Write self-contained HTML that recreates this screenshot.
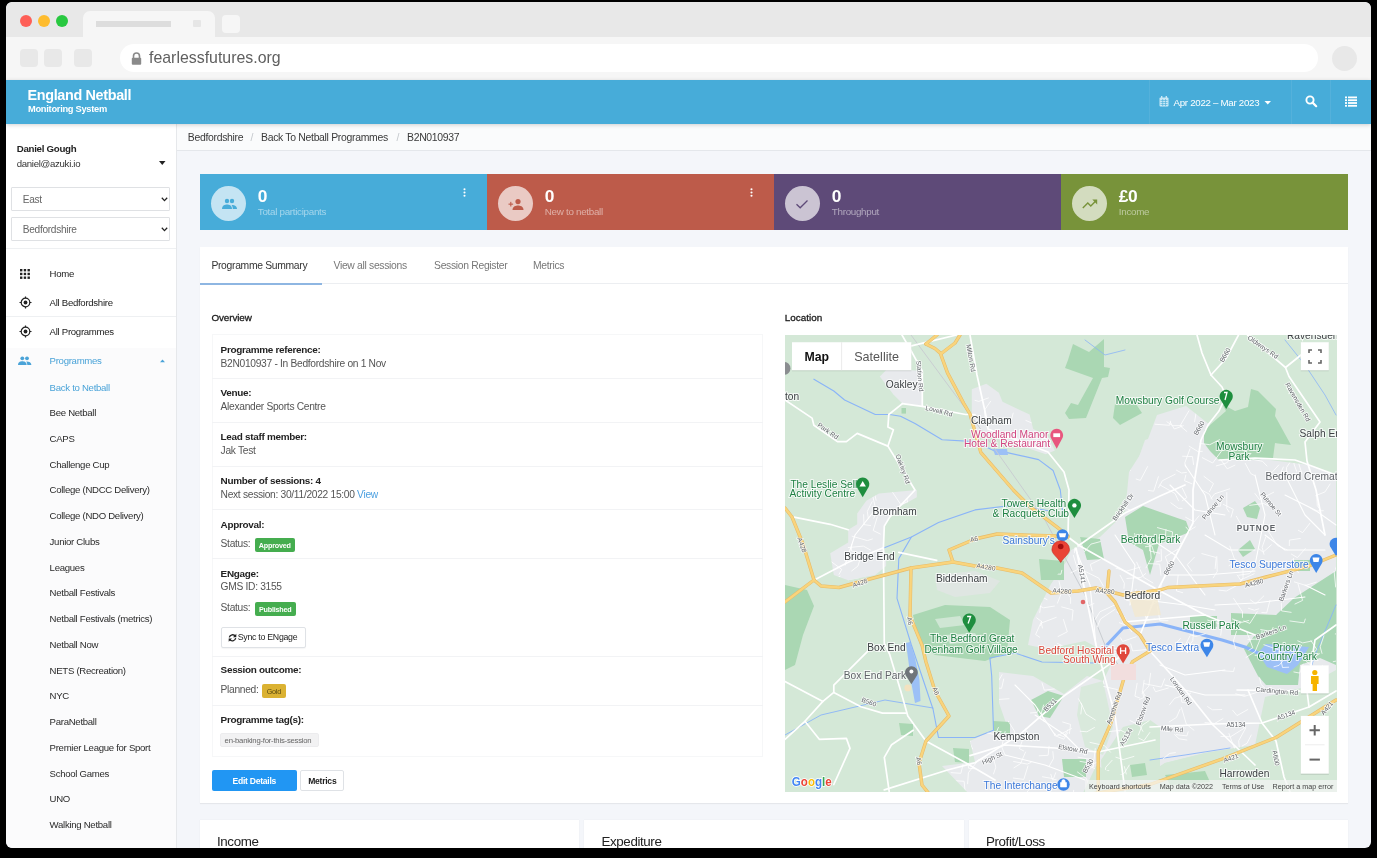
<!DOCTYPE html>
<html><head><meta charset="utf-8"><title>England Netball</title>
<style>
html,body{margin:0;padding:0;}
body{width:1377px;height:858px;background:#000;position:relative;overflow:hidden;font-family:"Liberation Sans",sans-serif;}
.t{position:absolute;line-height:1;white-space:nowrap;}
.b{position:absolute;box-sizing:border-box;}
#win{position:absolute;left:6px;top:2px;width:1365px;height:846px;border-radius:6px;overflow:hidden;background:#f4f6fa;}
</style></head><body>

<div id="win"></div><div id="clip" style="position:absolute;left:0;top:0;width:1377px;height:858px;will-change:transform;clip-path:inset(2px 6px 10px 6px round 6px 6px 7px 7px);">
<div class="b" style="left:6px;top:2px;width:1365px;height:35px;background:#e8e8e8;border-radius:6px 6px 0 0;"></div>
<div class="b" style="left:6px;top:37px;width:1365px;height:43px;background:#f6f6f6;"></div>
<div class="b" style="left:19.8px;top:14.8px;width:12.400000000000002px;height:12.399999999999999px;background:#fe5f57;border-radius:50%;"></div>
<div class="b" style="left:37.8px;top:14.8px;width:12.400000000000006px;height:12.399999999999999px;background:#febc2e;border-radius:50%;"></div>
<div class="b" style="left:55.8px;top:14.8px;width:12.400000000000006px;height:12.399999999999999px;background:#28c840;border-radius:50%;"></div>
<div class="b" style="left:83px;top:11px;width:132px;height:26px;background:#f6f6f6;border-radius:7px 7px 0 0;"></div>
<div class="b" style="left:96px;top:21px;width:75px;height:6px;background:#dddddd;"></div>
<div class="b" style="left:193px;top:20px;width:8px;height:7px;background:#e6e6e6;border-radius:1px;"></div>
<div class="b" style="left:222px;top:15px;width:18px;height:18px;background:#f6f6f6;border-radius:4px;"></div>
<div class="b" style="left:20px;top:49px;width:18px;height:18px;background:#e8e8e8;border-radius:4px;"></div>
<div class="b" style="left:44px;top:49px;width:18px;height:18px;background:#e8e8e8;border-radius:4px;"></div>
<div class="b" style="left:74px;top:49px;width:18px;height:18px;background:#e8e8e8;border-radius:4px;"></div>
<div class="b" style="left:120px;top:44px;width:1198px;height:28px;background:#ffffff;border-radius:14px;"></div>
<svg class="b" style="left:131px;top:52px;" width="11" height="13" viewBox="0 0 11 13"><path d="M2.5 6 V4 A3 3 0 0 1 8.5 4 V6" fill="none" stroke="#8a8a8a" stroke-width="1.6"/><rect x="0.8" y="5.8" width="9.4" height="7" rx="1" fill="#8a8a8a"/></svg>
<div class="t" style="left:149.00px;top:49.98px;font-size:15.9px;font-weight:400;color:#606060;">fearlessfutures.org</div>
<div class="b" style="left:1332px;top:46px;width:25px;height:25px;background:#e8e8e8;border-radius:50%;"></div>
<div class="b" style="left:6px;top:80px;width:1365px;height:44px;background:#47acd9;box-shadow:0 1px 4px rgba(0,0,0,0.18);z-index:2;"></div>
<div class="t" style="left:27.60px;top:88.16px;font-size:14.4px;font-weight:700;color:#ffffff;z-index:3;letter-spacing:-0.35px;">England Netball</div>
<div class="t" style="left:28.00px;top:105.30px;font-size:9.3px;font-weight:700;color:#ffffff;letter-spacing:-0.03em;z-index:3;">Monitoring System</div>
<div class="b" style="left:1149px;top:80px;width:1px;height:44px;background:rgba(255,255,255,0.07);z-index:3;"></div>
<div class="b" style="left:1290.5px;top:80px;width:1.0px;height:44px;background:rgba(255,255,255,0.07);z-index:3;"></div>
<div class="b" style="left:1330px;top:80px;width:1px;height:44px;background:rgba(255,255,255,0.07);z-index:3;"></div>
<svg class="b" style="left:1159px;top:96px;z-index:3;" width="10" height="11" viewBox="0 0 10 11"><rect x="0.5" y="1.5" width="9" height="9" rx="1" fill="#c9e8f6"/><rect x="2" y="0" width="1.4" height="2.5" fill="#c9e8f6"/><rect x="6.6" y="0" width="1.4" height="2.5" fill="#c9e8f6"/><g fill="#47acd9"><rect x="1.5" y="4" width="7" height="0.6"/><rect x="1.5" y="6" width="7" height="0.6"/><rect x="1.5" y="8" width="7" height="0.6"/><rect x="3.5" y="3" width="0.6" height="7"/><rect x="6" y="3" width="0.6" height="7"/></g></svg>
<div class="t" style="left:1173.50px;top:97.74px;font-size:9.72px;font-weight:400;color:#ffffff;letter-spacing:-0.03em;z-index:3;">Apr 2022 &#8211; Mar 2023</div>
<svg class="b" style="left:1264px;top:100px;z-index:3;" width="8" height="5" viewBox="0 0 8 5"><path d="M0.5 1 L7 1 L3.75 4.5 Z" fill="#ffffff"/></svg>
<svg class="b" style="left:1305px;top:95px;z-index:3;" width="13" height="13" viewBox="0 0 13 13"><circle cx="5" cy="5" r="3.6" fill="none" stroke="#ffffff" stroke-width="1.9"/><path d="M7.6 7.6 L11.2 11.2" stroke="#ffffff" stroke-width="2.2" stroke-linecap="round"/></svg>
<svg class="b" style="left:1345px;top:96px;z-index:3;" width="12" height="11" viewBox="0 0 12 11"><g fill="#ffffff"><rect x="0" y="0.5" width="2" height="1.8"/><rect x="3" y="0.5" width="9" height="1.8"/><rect x="0" y="3.3" width="2" height="1.8"/><rect x="3" y="3.3" width="9" height="1.8"/><rect x="0" y="6.1" width="2" height="1.8"/><rect x="3" y="6.1" width="9" height="1.8"/><rect x="0" y="8.9" width="2" height="1.8"/><rect x="3" y="8.9" width="9" height="1.8"/></g></svg>
<div class="b" style="left:6px;top:124px;width:171px;height:724px;background:#ffffff;border-right:1px solid #e6e8eb;"></div>
<div class="b" style="left:6px;top:347.5px;width:170px;height:500.5px;background:#fbfbfc;"></div>
<div class="t" style="left:16.70px;top:144.34px;font-size:9.72px;font-weight:700;color:#222222;letter-spacing:-0.03em;">Daniel Gough</div>
<div class="t" style="left:16.70px;top:158.53px;font-size:9.61px;font-weight:400;color:#333333;letter-spacing:-0.03em;">daniel@azuki.io</div>
<svg class="b" style="left:158.5px;top:160.5px;" width="7" height="4.5" viewBox="0 0 7 4.5"><path d="M0 0 L6.5 0 L3.25 4 Z" fill="#222"/></svg>
<div class="b" style="left:11px;top:187px;width:159px;height:24px;background:#fff;border:1px solid #dfe1e4;border-radius:1px;"></div>
<div class="b" style="left:11px;top:217px;width:159px;height:24px;background:#fff;border:1px solid #dfe1e4;border-radius:1px;"></div>
<div class="t" style="left:22.80px;top:194.98px;font-size:10.14px;font-weight:400;color:#666666;letter-spacing:-0.03em;">East</div>
<div class="t" style="left:22.80px;top:224.98px;font-size:10.14px;font-weight:400;color:#666666;letter-spacing:-0.03em;">Bedfordshire</div>
<svg class="b" style="left:160.5px;top:196.5px;" width="7" height="5" viewBox="0 0 7 5"><path d="M0.8 0.8 L3.5 3.6 L6.2 0.8" fill="none" stroke="#222" stroke-width="1.3"/></svg>
<svg class="b" style="left:160.5px;top:226.5px;" width="7" height="5" viewBox="0 0 7 5"><path d="M0.8 0.8 L3.5 3.6 L6.2 0.8" fill="none" stroke="#222" stroke-width="1.3"/></svg>
<div class="b" style="left:6px;top:247.5px;width:170px;height:1.0px;background:#eef0f2;"></div>
<div class="b" style="left:6px;top:316px;width:170px;height:1px;background:#eef0f2;"></div>
<svg class="b" style="left:20px;top:269px;" width="10" height="10" viewBox="0 0 10 10"><rect x="0.00" y="0.00" width="2.4" height="2.4" fill="#222"/><rect x="3.75" y="0.00" width="2.4" height="2.4" fill="#222"/><rect x="7.50" y="0.00" width="2.4" height="2.4" fill="#222"/><rect x="0.00" y="3.75" width="2.4" height="2.4" fill="#222"/><rect x="3.75" y="3.75" width="2.4" height="2.4" fill="#222"/><rect x="7.50" y="3.75" width="2.4" height="2.4" fill="#222"/><rect x="0.00" y="7.50" width="2.4" height="2.4" fill="#222"/><rect x="3.75" y="7.50" width="2.4" height="2.4" fill="#222"/><rect x="7.50" y="7.50" width="2.4" height="2.4" fill="#222"/></svg>
<svg class="b" style="left:18.5px;top:295.8px;" width="13" height="13" viewBox="0 0 13 13"><circle cx="6.5" cy="6.5" r="4.3" fill="none" stroke="#222" stroke-width="1.2"/><circle cx="6.5" cy="6.5" r="1.9" fill="#222"/><path d="M6.5 0.5 V2.2 M6.5 10.8 V12.5 M0.5 6.5 H2.2 M10.8 6.5 H12.5" stroke="#222" stroke-width="1.2"/></svg>
<svg class="b" style="left:18.5px;top:325px;" width="13" height="13" viewBox="0 0 13 13"><circle cx="6.5" cy="6.5" r="4.3" fill="none" stroke="#222" stroke-width="1.2"/><circle cx="6.5" cy="6.5" r="1.9" fill="#222"/><path d="M6.5 0.5 V2.2 M6.5 10.8 V12.5 M0.5 6.5 H2.2 M10.8 6.5 H12.5" stroke="#222" stroke-width="1.2"/></svg>
<svg class="b" style="left:18.3px;top:355.8px;" width="14" height="10" viewBox="0 0 14 10"><g fill="#4aa3d8"><circle cx="4.3" cy="2.3" r="1.9"/><circle cx="9" cy="2.3" r="1.9"/><path d="M0 9 C0 5.8 2.5 5.2 4.3 5.2 C6.1 5.2 8.6 5.8 8.6 9 Z"/><path d="M9.3 9 C9.3 7.4 8.9 6.3 8.2 5.4 C11 5.3 13.4 6.2 13.4 9 Z"/></g></svg>
<div class="t" style="left:49.60px;top:269.03px;font-size:9.61px;font-weight:400;color:#222222;letter-spacing:-0.03em;">Home</div>
<div class="t" style="left:49.60px;top:298.43px;font-size:9.61px;font-weight:400;color:#222222;letter-spacing:-0.03em;">All Bedfordshire</div>
<div class="t" style="left:49.60px;top:327.03px;font-size:9.61px;font-weight:400;color:#222222;letter-spacing:-0.03em;">All Programmes</div>
<div class="t" style="left:49.60px;top:356.03px;font-size:9.61px;font-weight:400;color:#4aa3d8;letter-spacing:-0.03em;">Programmes</div>
<svg class="b" style="left:159.5px;top:359px;" width="6" height="4" viewBox="0 0 6 4"><path d="M0 3.2 L5 3.2 L2.5 0.4 Z" fill="#4aa3d8"/></svg>
<div class="t" style="left:49.60px;top:382.53px;font-size:9.61px;font-weight:400;color:#4aa3d8;letter-spacing:-0.03em;">Back to Netball</div>
<div class="t" style="left:49.60px;top:408.27px;font-size:9.61px;font-weight:400;color:#2a2a2a;letter-spacing:-0.03em;">Bee Netball</div>
<div class="t" style="left:49.60px;top:434.01px;font-size:9.61px;font-weight:400;color:#2a2a2a;letter-spacing:-0.03em;">CAPS</div>
<div class="t" style="left:49.60px;top:459.75px;font-size:9.61px;font-weight:400;color:#2a2a2a;letter-spacing:-0.03em;">Challenge Cup</div>
<div class="t" style="left:49.60px;top:485.49px;font-size:9.61px;font-weight:400;color:#2a2a2a;letter-spacing:-0.03em;">College (NDCC Delivery)</div>
<div class="t" style="left:49.60px;top:511.23px;font-size:9.61px;font-weight:400;color:#2a2a2a;letter-spacing:-0.03em;">College (NDO Delivery)</div>
<div class="t" style="left:49.60px;top:536.97px;font-size:9.61px;font-weight:400;color:#2a2a2a;letter-spacing:-0.03em;">Junior Clubs</div>
<div class="t" style="left:49.60px;top:562.71px;font-size:9.61px;font-weight:400;color:#2a2a2a;letter-spacing:-0.03em;">Leagues</div>
<div class="t" style="left:49.60px;top:588.45px;font-size:9.61px;font-weight:400;color:#2a2a2a;letter-spacing:-0.03em;">Netball Festivals</div>
<div class="t" style="left:49.60px;top:614.19px;font-size:9.61px;font-weight:400;color:#2a2a2a;letter-spacing:-0.03em;">Netball Festivals (metrics)</div>
<div class="t" style="left:49.60px;top:639.93px;font-size:9.61px;font-weight:400;color:#2a2a2a;letter-spacing:-0.03em;">Netball Now</div>
<div class="t" style="left:49.60px;top:665.67px;font-size:9.61px;font-weight:400;color:#2a2a2a;letter-spacing:-0.03em;">NETS (Recreation)</div>
<div class="t" style="left:49.60px;top:691.41px;font-size:9.61px;font-weight:400;color:#2a2a2a;letter-spacing:-0.03em;">NYC</div>
<div class="t" style="left:49.60px;top:717.15px;font-size:9.61px;font-weight:400;color:#2a2a2a;letter-spacing:-0.03em;">ParaNetball</div>
<div class="t" style="left:49.60px;top:742.89px;font-size:9.61px;font-weight:400;color:#2a2a2a;letter-spacing:-0.03em;">Premier League for Sport</div>
<div class="t" style="left:49.60px;top:768.63px;font-size:9.61px;font-weight:400;color:#2a2a2a;letter-spacing:-0.03em;">School Games</div>
<div class="t" style="left:49.60px;top:794.37px;font-size:9.61px;font-weight:400;color:#2a2a2a;letter-spacing:-0.03em;">UNO</div>
<div class="t" style="left:49.60px;top:820.11px;font-size:9.61px;font-weight:400;color:#2a2a2a;letter-spacing:-0.03em;">Walking Netball</div>
<div class="b" style="left:177px;top:124px;width:1194px;height:27px;background:#fafbfc;border-bottom:1px solid #e4e7eb;"></div>
<div class="t" style="left:187.80px;top:132.72px;font-size:10.45px;font-weight:400;color:#3a3a3a;letter-spacing:-0.03em;">Bedfordshire</div>
<div class="t" style="left:250.50px;top:132.72px;font-size:10.45px;font-weight:400;color:#c4c8cc;letter-spacing:-0.03em;">/</div>
<div class="t" style="left:261.00px;top:132.72px;font-size:10.45px;font-weight:400;color:#3a3a3a;letter-spacing:-0.03em;">Back To Netball Programmes</div>
<div class="t" style="left:396.50px;top:132.72px;font-size:10.45px;font-weight:400;color:#c4c8cc;letter-spacing:-0.03em;">/</div>
<div class="t" style="left:407.00px;top:132.72px;font-size:10.45px;font-weight:400;color:#3a3a3a;letter-spacing:-0.03em;">B2N010937</div>
<div class="b" style="left:200px;top:174px;width:287px;height:56px;background:#47acd9;"></div>
<div class="b" style="left:211px;top:186px;width:35px;height:35px;background:rgba(255,255,255,0.68);border-radius:50%;"></div>
<svg class="b" style="left:220.5px;top:197.5px;" width="17" height="13" viewBox="0 0 17 13"><g fill="#47acd9"><circle cx="6" cy="3" r="2.2"/><circle cx="11" cy="3" r="2.2"/><path d="M1 11 C1 7.3 4 6.6 6 6.6 C8 6.6 11 7.3 11 11 Z"/><path d="M11.8 11 C11.8 9 11.3 7.8 10.5 6.9 C13.5 6.8 16 7.8 16 11 Z"/></g></svg>
<div class="t" style="left:257.80px;top:187.55px;font-size:17.35px;font-weight:700;color:#ffffff;letter-spacing:-0.03em;">0</div>
<div class="t" style="left:257.80px;top:206.95px;font-size:9.82px;font-weight:400;color:rgba(255,255,255,0.5);letter-spacing:-0.03em;">Total participants</div>
<svg class="b" style="left:463px;top:188px;" width="3" height="9" viewBox="0 0 3 9"><g fill="#fff"><circle cx="1.5" cy="1.2" r="1.05"/><circle cx="1.5" cy="4.5" r="1.05"/><circle cx="1.5" cy="7.8" r="1.05"/></g></svg>
<div class="b" style="left:487px;top:174px;width:287px;height:56px;background:#bd5b4a;"></div>
<div class="b" style="left:498px;top:186px;width:35px;height:35px;background:rgba(255,255,255,0.68);border-radius:50%;"></div>
<svg class="b" style="left:507.5px;top:197.5px;" width="17" height="13" viewBox="0 0 17 13"><g fill="#bd5b4a"><circle cx="10" cy="3.6" r="2.6"/><path d="M4.5 12 C4.5 8.4 8 7.6 10 7.6 C12 7.6 15.5 8.4 15.5 12 Z"/><rect x="0.5" y="5.6" width="4.6" height="1.1"/><rect x="2.25" y="3.85" width="1.1" height="4.6"/></g></svg>
<div class="t" style="left:544.80px;top:187.55px;font-size:17.35px;font-weight:700;color:#ffffff;letter-spacing:-0.03em;">0</div>
<div class="t" style="left:544.80px;top:206.95px;font-size:9.82px;font-weight:400;color:rgba(255,255,255,0.5);letter-spacing:-0.03em;">New to netball</div>
<svg class="b" style="left:750px;top:188px;" width="3" height="9" viewBox="0 0 3 9"><g fill="#fff"><circle cx="1.5" cy="1.2" r="1.05"/><circle cx="1.5" cy="4.5" r="1.05"/><circle cx="1.5" cy="7.8" r="1.05"/></g></svg>
<div class="b" style="left:774px;top:174px;width:287px;height:56px;background:#5e4a78;"></div>
<div class="b" style="left:785px;top:186px;width:35px;height:35px;background:rgba(255,255,255,0.68);border-radius:50%;"></div>
<svg class="b" style="left:794.5px;top:197.5px;" width="17" height="13" viewBox="0 0 17 13"><path d="M1.5 6.2 L5.2 9.8 L12.5 2.5" fill="none" stroke="#5e4a78" stroke-width="1.3"/></svg>
<div class="t" style="left:831.80px;top:187.55px;font-size:17.35px;font-weight:700;color:#ffffff;letter-spacing:-0.03em;">0</div>
<div class="t" style="left:831.80px;top:206.95px;font-size:9.82px;font-weight:400;color:rgba(255,255,255,0.5);letter-spacing:-0.03em;">Throughput</div>
<div class="b" style="left:1061px;top:174px;width:287px;height:56px;background:#78933a;"></div>
<div class="b" style="left:1072px;top:186px;width:35px;height:35px;background:rgba(255,255,255,0.68);border-radius:50%;"></div>
<svg class="b" style="left:1081.5px;top:197.5px;" width="17" height="13" viewBox="0 0 17 13"><path d="M0.8 10 L5.8 5 L8.8 8 L14 2.8" fill="none" stroke="#78933a" stroke-width="1.4"/><path d="M10.3 1.6 L15.2 1.6 L15.2 6.5 Z" fill="#78933a"/></svg>
<div class="t" style="left:1118.80px;top:187.55px;font-size:17.35px;font-weight:700;color:#ffffff;letter-spacing:-0.03em;">&#163;0</div>
<div class="t" style="left:1118.80px;top:206.95px;font-size:9.82px;font-weight:400;color:rgba(255,255,255,0.5);letter-spacing:-0.03em;">Income</div>
<div class="b" style="left:200px;top:247px;width:1148px;height:556px;background:#ffffff;box-shadow:0 1px 1px rgba(0,0,0,0.06);"></div>
<div class="b" style="left:200px;top:283px;width:1148px;height:1px;background:#eceef1;"></div>
<div class="b" style="left:200px;top:282.5px;width:122px;height:2.0px;background:#8eb6e2;"></div>
<div class="t" style="left:211.40px;top:261.20px;font-size:10.35px;font-weight:400;color:#333333;letter-spacing:-0.03em;">Programme Summary</div>
<div class="t" style="left:333.50px;top:261.20px;font-size:10.35px;font-weight:400;color:#777777;letter-spacing:-0.03em;">View all sessions</div>
<div class="t" style="left:434.10px;top:261.20px;font-size:10.35px;font-weight:400;color:#777777;letter-spacing:-0.03em;">Session Register</div>
<div class="t" style="left:533.00px;top:261.20px;font-size:10.35px;font-weight:400;color:#777777;letter-spacing:-0.03em;">Metrics</div>
<div class="t" style="left:211.40px;top:312.99px;font-size:9.9px;font-weight:400;color:#1a1a1a;letter-spacing:-0.1px;-webkit-text-stroke:0.3px #1a1a1a;">Overview</div>
<div class="t" style="left:784.80px;top:312.99px;font-size:9.9px;font-weight:400;color:#1a1a1a;letter-spacing:0px;-webkit-text-stroke:0.3px #1a1a1a;">Location</div>
<div class="b" style="left:212px;top:334px;width:551px;height:423px;border:1px solid #f6f7f8;"></div>
<div class="b" style="left:212px;top:378px;width:551px;height:1px;background:#f2f3f5;"></div>
<div class="b" style="left:212px;top:421.9px;width:551px;height:1.0px;background:#f2f3f5;"></div>
<div class="b" style="left:212px;top:465.5px;width:551px;height:1.0px;background:#f2f3f5;"></div>
<div class="b" style="left:212px;top:509.3px;width:551px;height:1.0px;background:#f2f3f5;"></div>
<div class="b" style="left:212px;top:558.4px;width:551px;height:1.0px;background:#f2f3f5;"></div>
<div class="b" style="left:212px;top:655.6px;width:551px;height:1.0px;background:#f2f3f5;"></div>
<div class="b" style="left:212px;top:705.1px;width:551px;height:1.0px;background:#f2f3f5;"></div>
<div class="t" style="left:220.60px;top:344.56px;font-size:9.93px;font-weight:700;color:#222222;letter-spacing:-0.03em;">Programme reference:</div>
<div class="t" style="left:220.60px;top:358.70px;font-size:10.24px;font-weight:400;color:#555555;letter-spacing:-0.03em;">B2N010937 - In Bedfordshire on 1 Nov</div>
<div class="t" style="left:220.60px;top:388.16px;font-size:9.93px;font-weight:700;color:#222222;letter-spacing:-0.03em;">Venue:</div>
<div class="t" style="left:220.60px;top:402.30px;font-size:10.24px;font-weight:400;color:#555555;letter-spacing:-0.03em;">Alexander Sports Centre</div>
<div class="t" style="left:220.60px;top:431.96px;font-size:9.93px;font-weight:700;color:#222222;letter-spacing:-0.03em;">Lead staff member:</div>
<div class="t" style="left:220.60px;top:446.10px;font-size:10.24px;font-weight:400;color:#555555;letter-spacing:-0.03em;">Jak Test</div>
<div class="t" style="left:220.60px;top:475.76px;font-size:9.93px;font-weight:700;color:#222222;letter-spacing:-0.03em;">Number of sessions: 4</div>
<div class="t" style="left:220.60px;top:489.90px;font-size:10.24px;font-weight:400;color:#555555;letter-spacing:-0.03em;">Next session: 30/11/2022 15:00 <span style="color:#4a9fe0">View</span></div>
<div class="t" style="left:220.60px;top:519.66px;font-size:9.93px;font-weight:700;color:#222222;letter-spacing:-0.03em;">Approval:</div>
<div class="t" style="left:220.60px;top:539.00px;font-size:10.24px;font-weight:400;color:#555555;letter-spacing:-0.03em;">Status:</div>
<div class="b" style="left:254.5px;top:538px;width:40.5px;height:13.5px;background:#45ad4f;border-radius:2px;"></div>
<div class="t" style="left:74.75px;width:400px;text-align:center;top:541.67px;font-size:7.21px;font-weight:700;color:#ffffff;letter-spacing:-0.03em;">Approved</div>
<div class="t" style="left:220.60px;top:568.66px;font-size:9.93px;font-weight:700;color:#222222;letter-spacing:-0.03em;">ENgage:</div>
<div class="t" style="left:220.60px;top:582.10px;font-size:10.24px;font-weight:400;color:#555555;letter-spacing:-0.03em;">GMS ID: 3155</div>
<div class="t" style="left:220.60px;top:602.80px;font-size:10.24px;font-weight:400;color:#555555;letter-spacing:-0.03em;">Status:</div>
<div class="b" style="left:254.5px;top:602px;width:41.5px;height:13.5px;background:#45ad4f;border-radius:2px;"></div>
<div class="t" style="left:75.25px;width:400px;text-align:center;top:605.67px;font-size:7.21px;font-weight:700;color:#ffffff;letter-spacing:-0.03em;">Published</div>
<div class="b" style="left:220.7px;top:627.4px;width:85.40000000000003px;height:20.700000000000045px;background:#fff;border:1px solid #dfe2e6;border-radius:2px;box-shadow:0 1px 1px rgba(0,0,0,0.04);"></div>
<svg class="b" style="left:227.5px;top:632.5px;" width="9" height="10" viewBox="0 0 9 10"><path d="M7.4 3.2 A3.4 3.4 0 0 0 1.3 4.4" fill="none" stroke="#222" stroke-width="1.3"/><path d="M1.6 6.4 A3.4 3.4 0 0 0 7.7 5.2" fill="none" stroke="#222" stroke-width="1.3"/><path d="M8.3 0.8 L8.3 4.2 L5 4.2 Z" fill="#222"/><path d="M0.7 8.8 L0.7 5.4 L4 5.4 Z" fill="#222"/></svg>
<div class="t" style="left:237.70px;top:633.34px;font-size:8.78px;font-weight:400;color:#222222;letter-spacing:-0.03em;">Sync to ENgage</div>
<div class="t" style="left:220.60px;top:665.26px;font-size:9.93px;font-weight:700;color:#222222;letter-spacing:-0.03em;">Session outcome:</div>
<div class="t" style="left:220.60px;top:685.10px;font-size:10.24px;font-weight:400;color:#555555;letter-spacing:-0.03em;">Planned:</div>
<div class="b" style="left:261.7px;top:684.4px;width:24.30000000000001px;height:13.600000000000023px;background:#dbb232;border-radius:2px;"></div>
<div class="t" style="left:73.85px;width:400px;text-align:center;top:688.27px;font-size:7.21px;font-weight:400;color:#5a4a10;letter-spacing:-0.03em;">Gold</div>
<div class="t" style="left:220.60px;top:714.76px;font-size:9.93px;font-weight:700;color:#222222;letter-spacing:-0.03em;">Programme tag(s):</div>
<div class="b" style="left:220.3px;top:732.8px;width:98.89999999999998px;height:14.600000000000023px;background:#f2f2f3;border-radius:2px;border:1px solid #ececee;"></div>
<div class="t" style="left:224.60px;top:736.63px;font-size:7.73px;font-weight:400;color:#666666;letter-spacing:-0.03em;">en-banking-for-this-session</div>
<div class="b" style="left:211.5px;top:769.8px;width:85.5px;height:21.200000000000045px;background:#2196f3;border-radius:2px;"></div>
<div class="t" style="left:54.25px;width:400px;text-align:center;top:776.72px;font-size:8.57px;font-weight:700;color:#ffffff;letter-spacing:-0.03em;">Edit Details</div>
<div class="b" style="left:300.2px;top:769.8px;width:44.19999999999999px;height:21.200000000000045px;background:#fff;border:1px solid #dfe2e6;border-radius:2px;"></div>
<div class="t" style="left:122.30px;width:400px;text-align:center;top:776.72px;font-size:8.57px;font-weight:700;color:#222222;letter-spacing:-0.03em;">Metrics</div>
<svg class="b" style="left:785px;top:335px;" width="552" height="457" viewBox="0 0 552 457" font-family="Liberation Sans, sans-serif"><rect width="552" height="457" fill="#d4e8d7"/><polygon points="344,137 360,112 372,80 401,71 425,90 470,123 524,130 551,140 551,335 520,352 480,362 470,410 420,418 380,428 365,438 330,440 315,432 311,431 297,460 185,460 157,431 190,427 185,406 208,395 221,388 214,368 214,337 248,341 279,359 302,341 318,346 330,322 300,306 262,314 243,310 248,285 266,249 281,227 286,215 315,202 340,178" fill="#e8eaed" /><polygon points="94.8,41.5 101,35.2 126.4,35.2 137.3,36.1 137.3,70.4 117.4,68.6 108.4,59.6" fill="#e8eaed" /><polygon points="186.8,54.2 201.3,48.8 213.9,57.8 217.5,66.8 244.6,79.5 248.2,93.9 262.7,101.1 269.9,115.6 260.9,119.2 239.2,112 203.1,101.1 186.8,93.9" fill="#e8eaed" /><polygon points="72.2,178.5 81.3,165.8 93.9,158.6 131.8,155 131.8,162.2 115.6,171.3 104.7,182.1 99.3,191.1 98.4,212.8 101.1,220 101.1,230.9 90.3,239.9 63.2,245.3 48.8,239.9 45.2,218.2 63.2,207.4 63.2,194.7 72.2,189.3" fill="#e8eaed" /><polygon points="150,240 190,236 215,246 205,258 170,262 152,255" fill="#dfe6e2" /><polygon points="360,105 375,100 375,160 344,150" fill="#e8eaed" /><polygon points="288,9 304,17 319,4 319,32 325,33 323,42 317,43 301,83 284,84 280,78 286,68 293,70 308,43 280,33 283,25" fill="#aad7b3" /><polygon points="330,69 351,69 357,78 335,90 328,83" fill="#aad7b3" /><polygon points="419,96 425,90 441,76 437,69 450,76 463,72 466,54 473,56 491,74 490,81 506,110 490,108 488,123 466,125 434,125 425,116 419,108" fill="#aad7b3" /><polygon points="340,182 358,171 375,177 401,186 405,197 374,209 365,240 358,215 344,207" fill="#aad7b3" /><polygon points="295,202 315,204 319,224 302,225" fill="#aad7b3" /><polygon points="254,224 279,226 279,245 256,245" fill="#aad7b3" /><polygon points="0,250 22,255 29,271 18,300 10,330 0,335" fill="#aad7b3" /><polygon points="128,280 160,270 205,272 225,285 222,318 200,326 150,320 135,310" fill="#aad7b3" /><polygon points="150,284 175,281 180,290 155,293" fill="#cfe6d4" /><polygon points="160,300 190,298 195,306 165,309" fill="#cfe6d4" /><polygon points="114,388 128,389 128,401 116,400" fill="#aad7b3" /><polygon points="168,413 184,414 184,428 170,427" fill="#aad7b3" /><polygon points="246,365 263,356 279,361 265,383 254,381" fill="#aad7b3" /><polygon points="208,386 225,387 225,399 209,398" fill="#aad7b3" /><polygon points="277,424 301,424 301,442 279,442" fill="#aad7b3" /><polygon points="470,300 509,263 551,236 551,330 535,323 515,330 513,350 481,350 473,341 459,314" fill="#a9d6b4" /><polygon points="405,281 432,281 432,292 405,292" fill="#aad7b3" /><polygon points="446,278 491,280 491,300 446,300" fill="#aad7b3" /><polygon points="365,438 380,428 420,418 470,410 551,378 551,457 365,457" fill="#d4e8d7" /><polygon points="380,440 420,436 425,447 385,450" fill="#aad7b3" /><polygon points="296,352 318,346 328,392 318,420 300,412 292,380" fill="#d9e9dc" /><polygon points="338,392 365,385 375,392 375,457 318,457 316,425" fill="#d4e8d7" /><polygon points="345,430 360,428 362,440 347,442" fill="#aad7b3" /><polygon points="458,173 470,166 475,173 472,184 462,182" fill="#aad7b3" /><polygon points="453,215 465,205 470,214 458,222" fill="#aad7b3" /><polygon points="509,225 525,225 525,236 509,236" fill="#aad7b3" /><polygon points="116.5,73 121,73 121,78.6 116.5,78.6" fill="#aad7b3" /><polygon points="473,318 481,309 524,312 513,330 502,339 482,332" fill="#9cc0f6" /><polygon points="121,308 125,307 130,323 134.5,345 135.5,366 130,368 126,346 123,323" fill="#9cc0f6" /><polyline points="320,312 338,293 375,289 410,298 437,305 460,312 473,318" fill="none" stroke="#8ab4f8" stroke-width="3.2" stroke-linejoin="round" stroke-linecap="round" /><polyline points="28.9,44.2 48.8,56 59.6,65 90.3,79.5 104.7,79.5 115.6,81.3 130,88.5 157.1,104.7 190,106.6 208.5,115.6 221.1,117.4 253.6,124.6 268.1,135.5 275.3,155 278,180" fill="none" stroke="#8ab4f8" stroke-width="1.1" stroke-linejoin="round" stroke-linecap="round" /><polyline points="99.3,212.8 126.4,202 153.5,187.5 190,174.9 230,170 265,176" fill="none" stroke="#8ab4f8" stroke-width="1.1" stroke-linejoin="round" stroke-linecap="round" /><polyline points="126.4,202 113.8,223.6 112,263.4 126.4,310 148,374 153.5,402.5 190,402.5 208.5,395.3 206.7,341 204.9,323 230,318 257,327 311,328 320,312" fill="none" stroke="#8ab4f8" stroke-width="1.1" stroke-linejoin="round" stroke-linecap="round" /><polyline points="0,400 36,380 100,365 148,373" fill="none" stroke="#8ab4f8" stroke-width="0.9" stroke-linejoin="round" stroke-linecap="round" /><polyline points="365,425 400,420 445,413" fill="none" stroke="#8ab4f8" stroke-width="0.9" stroke-linejoin="round" stroke-linecap="round" /><polyline points="551,270 530,320 520,352" fill="none" stroke="#8ab4f8" stroke-width="0.9" stroke-linejoin="round" stroke-linecap="round" /><polyline points="300,5 320,20 340,15" fill="none" stroke="#8ab4f8" stroke-width="0.8" stroke-linejoin="round" stroke-linecap="round" /><polyline points="500,5 520,30 540,60 551,80" fill="none" stroke="#8ab4f8" stroke-width="0.8" stroke-linejoin="round" stroke-linecap="round" /><polygon points="208,114 222,114 223,120 210,120" fill="#9cc0f6" /><polyline points="126,0 200,100 260,185 300,260 320,310 340,340" fill="none" stroke="#c9cdd1" stroke-width="1" stroke-linejoin="round" stroke-linecap="round" /><polyline points="290,213 305,250 311,310" fill="none" stroke="#ffffff" stroke-width="1.1" stroke-linejoin="round" stroke-linecap="round" /><polyline points="330,200 350,230 345,270" fill="none" stroke="#ffffff" stroke-width="1.1" stroke-linejoin="round" stroke-linecap="round" /><polyline points="360,200 390,220 420,260" fill="none" stroke="#ffffff" stroke-width="1.1" stroke-linejoin="round" stroke-linecap="round" /><polyline points="400,130 420,160 430,200" fill="none" stroke="#ffffff" stroke-width="1.1" stroke-linejoin="round" stroke-linecap="round" /><polyline points="470,140 480,180 470,230" fill="none" stroke="#ffffff" stroke-width="1.1" stroke-linejoin="round" stroke-linecap="round" /><polyline points="500,140 520,180 540,200" fill="none" stroke="#ffffff" stroke-width="1.1" stroke-linejoin="round" stroke-linecap="round" /><polyline points="380,240 420,240 470,236" fill="none" stroke="#ffffff" stroke-width="1.1" stroke-linejoin="round" stroke-linecap="round" /><polyline points="430,270 470,268 520,262" fill="none" stroke="#ffffff" stroke-width="1.1" stroke-linejoin="round" stroke-linecap="round" /><polyline points="385,150 410,175 440,180" fill="none" stroke="#ffffff" stroke-width="1.1" stroke-linejoin="round" stroke-linecap="round" /><polyline points="250,380 280,400 300,420" fill="none" stroke="#ffffff" stroke-width="1.1" stroke-linejoin="round" stroke-linecap="round" /><polyline points="220,420 260,430 300,445" fill="none" stroke="#ffffff" stroke-width="1.1" stroke-linejoin="round" stroke-linecap="round" /><polyline points="380,350 420,360 460,360" fill="none" stroke="#ffffff" stroke-width="1.1" stroke-linejoin="round" stroke-linecap="round" /><polyline points="375,330 400,340 440,335" fill="none" stroke="#ffffff" stroke-width="1.1" stroke-linejoin="round" stroke-linecap="round" /><polyline points="500,160 530,175 551,190" fill="none" stroke="#ffffff" stroke-width="1.1" stroke-linejoin="round" stroke-linecap="round" /><polyline points="360,265 400,270 430,275" fill="none" stroke="#ffffff" stroke-width="1.1" stroke-linejoin="round" stroke-linecap="round" /><polyline points="230,350 250,370 270,400" fill="none" stroke="#ffffff" stroke-width="1.1" stroke-linejoin="round" stroke-linecap="round" /><polyline points="90,175 70,200 60,230" fill="none" stroke="#ffffff" stroke-width="1.1" stroke-linejoin="round" stroke-linecap="round" /><polyline points="480,200 500,215 540,215" fill="none" stroke="#ffffff" stroke-width="1.1" stroke-linejoin="round" stroke-linecap="round" /><polyline points="420,200 445,215 470,215" fill="none" stroke="#ffffff" stroke-width="1.1" stroke-linejoin="round" stroke-linecap="round" /><polyline points="520,250 540,260" fill="none" stroke="#ffffff" stroke-width="1.1" stroke-linejoin="round" stroke-linecap="round" /><clipPath id="urbclip"><polygon points="344,137 360,112 372,80 401,71 425,90 470,123 524,130 551,140 551,335 520,352 480,362 470,410 420,418 380,428 365,438 330,440 315,432 311,431 297,460 185,460 157,431 190,427 185,406 208,395 221,388 214,368 214,337 248,341 279,359 302,341 318,346 330,322 300,306 262,314 243,310 248,285 266,249 281,227 286,215 315,202 340,178"/><polygon points="72.2,178.5 81.3,165.8 93.9,158.6 131.8,155 131.8,162.2 115.6,171.3 104.7,182.1 99.3,191.1 98.4,212.8 101.1,220 101.1,230.9 90.3,239.9 63.2,245.3 48.8,239.9 45.2,218.2 63.2,207.4 63.2,194.7 72.2,189.3"/><polygon points="186.8,54.2 201.3,48.8 213.9,57.8 217.5,66.8 244.6,79.5 248.2,93.9 262.7,101.1 269.9,115.6 260.9,119.2 239.2,112 203.1,101.1 186.8,93.9"/></clipPath><path clip-path="url(#urbclip)" d="M271.6,282.2L256.4,288.0L257.5,293.4M302.1,310.1L299.0,319.2L290.8,317.9M495.9,311.9L512.4,317.8L516.8,309.9M465.8,85.1L474.2,88.1L472.4,98.2M207.1,294.6L200.0,306.4L200.3,310.4M83.5,320.0L65.6,321.6L63.1,312.3M201.4,151.2L208.7,161.7L203.6,166.7M473.5,213.4L478.1,217.2L486.7,209.6M66.8,209.1L66.3,215.9L76.2,218.4M178.1,94.6L184.4,103.5L180.8,107.1M402.0,64.3L394.0,65.9L394.2,73.5M137.6,350.6L132.7,359.9L133.5,367.2M149.0,167.1L165.6,167.1L166.6,161.7M549.9,299.0L567.7,297.2L568.2,289.7M44.9,302.3L47.8,308.6L56.1,306.4M164.4,298.7L166.7,305.9L175.1,312.4M109.5,213.3L110.2,230.2L120.0,231.4M121.1,309.7L138.5,308.8L145.5,303.4M255.8,101.2L263.7,105.6L269.7,105.1M461.7,296.8L467.8,312.8L463.5,315.4M285.4,319.4L294.6,320.9L297.9,311.4M75.4,223.3L72.9,231.1L66.4,236.1M538.2,96.6L526.4,109.9L531.9,116.7M512.9,248.5L517.6,265.4L509.6,269.2M78.3,86.7L86.3,102.8L80.2,107.3M228.3,77.7L226.4,85.0L221.3,89.5M390.8,417.6L384.5,418.4L378.0,424.0M360.0,211.8L366.8,210.8L369.6,219.5M548.6,409.3L547.8,426.5L551.8,432.9M469.2,93.3L482.3,91.5L485.4,88.7M530.2,104.8L541.8,106.9L541.8,113.9M113.3,302.9L130.2,301.8L136.4,296.8M163.6,220.7L169.2,230.4L179.6,226.6M236.8,291.5L240.6,298.1L239.7,308.8M474.5,342.4L476.1,349.5L480.6,353.8M149.6,224.4L147.7,238.3L150.6,244.2M464.3,170.4L478.7,168.5L484.5,171.5M445.3,67.6L441.4,74.9L436.2,77.7M112.1,78.6L112.6,85.9L106.6,96.0M390.5,139.1L377.4,145.7L373.4,152.9M58.5,149.9L64.5,166.2L71.5,164.9M445.5,419.8L460.5,427.1L465.5,426.4M272.2,308.3L283.8,313.8L287.7,320.4M373.5,141.3L368.7,156.2L363.0,155.4M500.8,449.3L506.1,463.8L504.6,469.7M407.8,66.2L419.0,65.0L426.7,58.4M289.6,71.3L295.3,74.2L299.9,82.5M509.0,246.8L520.7,250.4L531.7,247.0M292.2,436.8L301.3,443.4L304.9,453.5M327.5,125.2L339.8,128.7L345.8,135.8M528.8,405.4L545.0,404.7L552.3,409.2M142.9,272.8L153.3,271.2L155.8,278.9M245.1,378.0L252.2,377.4L252.6,372.9M315.8,224.3L305.3,229.4L307.2,235.9M501.3,431.5L494.3,433.8L489.0,441.0M513.7,111.4L521.3,113.5L520.4,122.9M204.9,201.1L216.8,202.3L217.6,213.1M359.2,344.9L357.6,356.0L361.6,364.2M462.5,304.5L476.1,303.8L477.1,295.6M475.8,302.8L470.1,316.6L460.7,322.7M201.7,185.1L194.9,201.7L190.0,200.6M162.5,348.5L167.2,358.7L174.3,363.0M400.9,139.7L399.5,145.7L407.4,149.0M223.1,385.9L229.5,396.1L229.2,404.1M391.1,135.0L396.6,138.0L401.8,137.4M134.5,141.0L122.5,153.2L115.4,148.3M108.8,330.3L116.8,336.2L124.2,336.4M221.5,143.4L229.8,155.2L234.8,152.8M272.4,353.5L259.3,355.2L256.9,347.5M47.9,414.6L42.6,430.7L45.0,438.9M137.8,292.1L139.7,301.0L130.5,304.8M438.3,383.4L429.7,388.4L419.6,387.6M431.8,221.1L432.2,236.6L428.0,243.2M45.4,201.2L43.3,207.4L34.0,214.3M381.0,194.1L380.4,202.3L373.3,202.9M551.9,315.0L552.6,325.7L547.8,326.8M95.3,154.1L89.2,156.6L91.2,165.6M45.5,162.6L47.6,175.1L55.8,183.5M330.8,455.1L329.4,468.7L322.3,469.2M520.6,213.2L512.4,222.7L506.1,218.9M293.2,172.9L283.3,175.9L275.8,173.5M178.1,429.0L175.9,438.3L165.7,437.6M339.9,311.3L329.5,313.6L320.2,309.8M65.7,452.5L75.0,466.6L84.0,470.3M168.5,359.9L183.5,368.4L188.6,367.9M531.5,157.3L532.3,170.8L535.4,174.7M480.9,201.6L477.1,212.3L479.1,219.7M174.2,291.1L160.5,297.1L163.3,308.4M416.0,154.6L424.5,159.3L427.3,164.8M352.2,347.9L349.9,361.2L355.0,363.1M167.5,448.9L163.2,453.8L159.7,451.7M172.9,70.7L184.8,74.4L183.5,84.4M507.4,123.9L501.5,132.5L501.6,139.4M213.2,256.3L208.8,261.6L202.2,257.7M460.9,392.7L453.7,405.8L454.7,416.2M228.9,319.5L241.5,319.7L242.8,312.4M229.1,98.5L232.9,104.4L242.6,108.4M277.3,386.9L285.5,389.4L284.4,398.9M293.3,363.4L296.9,370.2L295.8,379.4M207.5,419.8L210.8,432.2L208.4,439.3M451.2,181.0L459.8,196.4L464.2,194.8M464.2,69.6L463.4,80.2L473.0,82.6M228.5,214.9L220.4,224.7L223.4,228.3M272.6,399.3L278.9,401.7L283.2,394.3M534.8,318.5L524.2,325.2L519.7,320.2M180.1,101.8L187.5,113.2L191.9,111.3M457.9,227.6L458.1,242.7L452.5,251.1M241.9,194.1L245.3,205.6L236.6,209.8M508.5,223.0L508.1,229.0L513.7,238.2M495.0,440.2L496.1,450.5L486.1,453.4M255.9,226.9L252.8,234.2L254.6,243.5M204.3,214.6L221.9,214.5L223.3,222.1M414.2,180.5L409.1,186.9L400.3,182.1M48.8,251.0L56.5,254.3L59.6,259.1M160.5,344.7L171.8,345.9L177.3,350.6M506.3,432.1L503.9,447.7L508.5,457.5M288.2,219.8L292.6,234.5L285.5,238.0M153.2,79.7L146.5,88.0L136.6,90.9M69.7,426.9L82.7,437.6L93.0,438.5M405.2,300.6L398.1,314.1L402.9,317.8M485.1,264.9L481.7,277.9L476.5,277.5M434.4,60.5L430.0,65.9L421.4,68.4M310.3,413.2L308.3,430.5L305.6,433.7M136.1,136.6L137.3,152.5L141.6,152.9M251.5,256.2L256.4,265.9L254.7,277.8M381.6,86.6L387.6,90.7L397.0,90.6M422.3,371.4L427.4,374.8L437.1,374.5M283.3,176.5L288.8,179.3L295.6,170.4M117.9,309.2L134.9,313.1L142.8,310.0M84.5,134.9L74.8,137.1L66.9,134.0M410.6,191.7L404.0,195.7L400.7,191.8M362.8,131.2L355.3,145.4L350.8,143.9M56.6,452.0L50.2,454.6L43.9,464.1M111.2,141.6L104.4,149.8L93.5,152.9M359.0,348.6L376.4,352.1L379.8,343.5M351.6,67.4L356.5,75.7L360.8,77.8M233.3,262.2L236.1,275.3L242.1,275.0M315.9,178.5L310.6,189.3L317.6,194.3M141.5,430.6L137.5,447.4L128.5,446.8M141.3,93.0L135.9,102.6L129.9,105.5M515.7,203.4L504.4,205.1L504.3,211.0M331.5,276.8L339.4,281.5L343.2,289.4M102.8,387.4L105.6,397.4L102.3,407.5M135.0,277.5L144.6,282.5L148.5,277.3M383.7,352.9L370.5,356.7L368.2,352.0M250.9,73.1L263.8,73.7L265.2,67.1M107.3,156.9L115.9,169.7L122.5,166.7M294.7,100.7L300.2,113.0L308.7,118.3M288.7,454.9L287.8,466.0L276.6,467.0M309.3,268.4L303.5,270.8L300.1,265.3M355.5,232.0L341.1,236.3L330.6,233.0M489.1,157.0L474.4,164.5L469.7,158.2M94.0,421.2L104.7,421.3L106.6,410.4M551.6,350.1L550.8,362.7L556.4,364.0M422.3,285.0L437.1,289.6L435.7,300.6M334.9,239.9L339.4,248.3L338.9,253.7M265.7,238.7L275.9,239.2L276.9,234.9M55.9,416.7L59.4,423.6L69.0,429.0M143.8,401.0L141.1,408.9L132.1,415.6M48.2,312.2L45.1,320.1L49.8,323.0M490.6,79.9L505.2,86.1L511.1,95.3M405.1,113.5L399.8,127.9L400.9,132.4M154.3,181.9L152.2,190.9L159.6,194.0M191.3,168.5L190.2,175.8L201.5,179.4M498.5,131.7L492.9,144.2L485.5,142.3M79.0,424.1L84.7,427.3L88.4,434.8M256.8,285.7L250.6,299.5L255.1,302.5M415.9,71.4L411.4,76.0L409.5,87.2M339.5,61.1L333.7,64.7L327.2,64.4M287.5,72.7L293.4,87.7L301.9,86.0M434.9,104.5L424.8,109.7L414.6,108.4M445.1,153.7L429.6,158.8L426.0,163.6M143.7,445.3L157.8,453.8L162.1,448.7M351.5,301.6L337.6,306.5L335.4,302.5M504.5,285.9L519.1,287.9L520.4,283.7M257.8,336.2L272.8,339.5L277.2,337.8M460.1,128.1L465.8,138.6L469.8,140.7M250.2,204.7L239.9,218.8L245.4,224.5M429.8,451.5L422.3,461.3L418.8,459.4M249.8,268.7L258.5,272.8L269.8,271.0M537.5,329.9L533.7,344.2L539.4,346.9M100.8,399.6L84.8,405.6L78.5,404.1M524.6,426.5L521.4,436.9L511.6,435.6M330.5,422.1L338.2,424.6L349.3,421.3M149.2,210.4L158.7,213.9L164.0,205.0M451.7,250.6L441.4,256.0L433.7,255.1M291.0,308.8L285.5,315.2L284.7,322.5M64.1,169.8L67.9,181.4L65.6,189.2M330.5,317.8L326.3,327.3L334.5,332.7M437.8,114.4L427.7,128.0L417.0,122.5M469.5,238.6L455.6,245.0L452.0,239.7M351.3,253.9L346.7,266.2L341.1,265.2M250.3,250.0L251.0,264.5L247.6,270.0M271.3,209.7L263.3,219.2L262.6,226.4M237.9,403.8L234.5,413.7L239.0,416.1M474.3,356.6L459.3,361.4L450.4,358.7M74.3,398.6L88.0,401.3L92.1,405.5M363.8,95.7L353.6,101.7L350.6,108.1M208.0,257.4L216.4,272.3L223.7,269.7M125.4,324.1L117.7,336.9L118.3,347.3M284.9,162.0L301.9,162.1L306.0,159.3M505.8,422.2L512.4,432.1L512.4,439.9M206.7,160.6L216.2,163.2L221.7,169.7M174.1,325.2L168.1,334.0L157.2,338.2M225.7,288.7L217.3,299.4L216.7,308.3M72.6,87.1L62.1,88.7L59.0,91.7M109.6,261.3L113.8,272.2L109.4,274.9M138.5,150.7L138.7,163.0L141.0,166.3M320.1,397.0L335.9,395.3L341.3,398.2M93.2,67.7L93.4,78.4L104.9,80.2M462.1,123.3L477.5,126.3L482.3,131.3M186.3,357.3L200.0,358.7L205.0,362.9M131.0,264.0L119.3,277.4L109.8,271.6M198.8,397.0L210.3,399.8L213.8,391.5M251.3,251.3L257.0,262.0L262.4,264.8M365.0,206.0L364.6,216.0L375.1,218.3M464.2,285.3L457.0,287.3L447.1,283.9M104.1,209.6L103.8,223.5L96.1,224.6M395.2,373.9L391.5,382.4L383.8,387.2M243.1,430.6L238.8,444.4L227.9,443.0M139.2,201.5L146.2,204.0L152.8,213.2M466.4,399.7L462.0,408.3L456.9,411.1M409.6,222.0L402.2,229.7L407.1,236.5M449.7,118.3L441.6,128.0L430.9,131.0M261.5,120.3L273.4,125.1L278.4,132.6M180.3,150.3L169.2,156.3L166.0,152.2M43.7,362.0L44.3,370.1L47.5,374.1M444.0,453.7L433.7,457.4L428.8,464.3M150.1,304.8L158.3,304.6L167.5,310.6M549.1,236.0L550.7,252.2L559.0,252.8M385.5,167.6L393.4,173.3L397.5,173.4M147.6,440.8L155.0,446.3L162.4,439.1M416.5,218.5L431.2,222.5L430.1,233.9M286.8,393.4L271.7,401.1L269.3,397.8M112.1,188.5L111.2,202.3L105.6,209.4M270.3,183.9L277.8,190.3L274.7,195.6M149.4,131.5L159.6,138.8L163.4,135.0M94.2,116.7L97.3,122.2L104.6,125.6M246.5,187.6L261.1,191.7L260.0,202.7M204.3,359.4L212.8,364.5L224.4,363.7M152.5,222.1L147.4,237.0L138.1,235.6M525.2,187.9L517.6,197.6L513.0,195.1M365.0,210.1L366.2,223.5L360.8,233.2M478.5,309.6L494.6,315.2L492.9,325.7M393.2,239.9L391.4,255.9L398.1,257.8M317.1,76.9L327.0,82.5L330.9,90.4M344.4,429.8L339.2,438.3L330.2,442.4M200.2,352.5L216.6,353.3L218.8,343.6M499.4,104.1L490.6,114.6L497.4,122.8M448.4,263.1L457.5,276.8L457.5,282.8M453.3,240.3L464.3,238.7L468.9,234.5M369.6,89.2L384.6,90.3L385.7,85.8M294.3,82.2L300.7,84.5L305.8,75.3M131.4,192.5L132.6,201.0L130.5,205.5M133.0,214.3L129.9,230.8L125.2,230.7M372.3,271.3L374.9,285.8L383.4,285.7M549.1,210.2L553.4,225.7L550.4,234.5M146.8,143.2L142.2,155.3L137.2,154.3M99.4,433.6L109.0,435.1L109.1,447.1M394.1,352.3L396.9,367.3L402.1,367.2M363.2,228.6L374.7,229.2L376.0,240.7M217.3,339.3L213.6,345.7L203.3,341.9M186.7,399.2L184.9,407.8L187.7,414.3M420.6,298.7L410.5,301.5L404.6,299.5M265.7,438.9L267.5,444.8L271.6,444.3M231.9,295.5L235.8,304.0L227.0,310.0M475.3,294.5L486.6,296.5L488.2,292.1M226.2,208.7L223.7,222.8L214.3,222.8M119.7,88.8L114.9,97.3L103.8,93.4M539.9,454.1L531.8,457.3L525.6,447.0M74.1,243.5L57.2,246.9L57.4,254.8M465.1,264.7L470.8,268.8L479.1,260.6M396.3,372.2L401.3,389.1L409.3,395.5M101.3,246.1L110.7,250.4L109.4,255.1M251.4,282.7L257.2,287.0L255.1,291.1M161.8,323.1L171.3,324.1L172.9,318.4M251.9,81.6L247.6,88.3L240.5,85.3M475.6,101.4L493.2,100.1L493.9,92.9M353.4,402.9L358.9,405.7L365.0,397.2M96.1,352.7L85.3,358.8L80.7,353.2M292.6,422.1L308.6,424.9L308.6,432.0M193.3,145.2L210.3,143.6L220.1,149.0M144.3,454.3L156.4,458.4L155.3,465.5M193.3,353.5L196.7,359.6L203.0,362.8M372.1,192.5L387.6,196.9L387.0,202.2M235.7,188.1L227.3,200.0L221.4,197.2M287.8,151.4L285.7,166.1L280.8,171.4M534.7,62.8L543.7,63.1L552.4,69.4M147.4,362.8L158.4,367.5L160.8,371.3M87.5,160.0L91.3,177.0L88.6,183.6M186.3,329.9L194.2,333.7L197.5,339.4M202.5,385.3L204.5,391.7L207.9,394.4M359.8,279.2L361.7,285.2L370.3,284.0M42.9,352.6L30.5,358.1L27.5,353.7M82.7,332.1L77.6,342.2L79.0,352.5M267.8,416.2L268.5,423.6L263.9,431.7M320.6,105.0L333.5,111.2L330.4,122.1M148.1,224.7L165.4,223.3L166.4,212.4M281.9,72.5L273.5,73.5L267.6,78.8M393.1,214.0L380.3,221.7L383.9,231.2M205.9,65.9L199.9,74.5L199.9,82.1M341.5,243.5L355.9,242.4L361.0,238.3M397.1,152.7L401.8,162.6L396.8,166.1M72.9,387.5L65.2,391.3L60.2,384.5M539.6,421.1L532.8,424.0L535.0,433.8M92.4,181.7L88.2,195.5L95.7,199.2M210.5,120.2L212.1,127.2L217.8,126.9M142.0,272.4L150.0,272.6L151.6,264.1M500.5,426.8L500.2,434.1L494.9,441.2M465.3,449.8L471.1,452.1L476.4,459.9M186.7,282.6L190.1,291.3L187.8,301.3M523.0,120.4L508.8,128.4L511.8,136.8M318.4,351.4L332.5,354.6L336.9,359.3M258.7,369.6L256.3,378.1L259.4,387.1M217.0,145.8L215.3,158.5L207.9,166.7M78.6,278.3L91.8,282.7L90.8,289.0M41.4,430.6L51.2,434.1L57.6,443.0M71.5,324.5L81.9,328.0L87.5,317.5M390.8,399.6L401.9,400.9L403.3,396.4M395.6,303.2L390.9,308.6L395.9,314.7M80.3,253.3L96.2,258.6L95.5,263.6M193.7,193.2L193.6,201.1L204.3,203.1M518.7,68.0L501.1,71.5L490.5,66.9M84.2,266.1L93.4,269.0L100.6,278.2M52.3,72.7L45.2,82.6L41.6,80.9M74.8,375.3L64.0,377.2L58.8,374.8M240.7,416.7L235.5,428.7L228.6,433.0M220.2,318.7L213.3,322.4L205.8,321.7M153.1,424.7L147.7,437.5L140.4,442.3M334.0,287.6L342.3,290.6L347.0,297.1M418.6,141.1L428.5,148.6L424.2,157.1M297.9,235.3L313.9,243.2L318.5,251.4M75.8,89.0L64.8,90.1L64.3,96.7M444.7,210.7L450.5,227.0L443.7,230.8M459.0,65.5L444.3,75.0L440.0,85.4M113.5,141.6L96.4,143.5L91.9,141.1M109.8,379.0L111.0,387.2L120.6,387.5M161.3,397.1L160.2,407.5L148.9,408.2M115.0,405.7L106.5,417.0L100.8,414.1M133.6,108.7L149.3,110.5L158.2,105.8M309.7,436.0L314.9,439.4L319.4,450.3M518.3,328.8L514.8,338.1L508.5,336.9M445.9,446.1L429.5,453.4L425.4,459.9M137.7,434.8L139.3,449.9L144.8,456.2M184.3,78.1L175.9,80.0L174.3,76.1M257.1,441.7L268.5,443.7L270.8,437.4M125.2,445.8L131.5,457.7L130.4,467.1M168.4,354.9L161.1,369.8L162.1,377.2M340.5,161.8L325.2,169.7L327.5,177.1M327.4,425.0L320.8,432.2L320.1,437.4M525.1,172.8L530.2,176.0L538.7,175.7M294.6,426.3L308.6,428.7L315.2,425.8M294.8,396.2L301.9,396.8L309.8,392.3M71.6,116.8L82.1,121.1L80.7,127.2M65.9,291.5L57.0,293.3L54.4,286.4M324.2,435.5L316.5,436.8L306.8,432.2M297.5,196.0L289.5,207.7L289.4,218.2M541.1,424.1L541.0,438.8L535.1,447.5M450.3,130.0L442.2,133.8L435.5,124.2M376.9,246.9L373.7,263.6L361.9,263.4M121.8,163.1L123.6,172.7L132.5,172.5M436.7,163.8L435.3,171.2L427.8,171.0M248.7,216.6L263.6,225.4L269.4,225.1M404.1,75.5L395.1,90.8L402.2,96.8M436.9,335.7L448.5,336.5L449.5,332.4M176.6,366.3L192.3,373.3L190.8,379.4M527.4,305.9L517.7,307.9L512.4,305.7M547.7,86.1L557.4,94.0L567.4,94.8M309.4,174.5L320.6,174.8L324.4,172.4M66.7,201.1L82.4,205.6L87.8,203.8M511.1,373.5L521.8,376.9L531.4,374.0M324.2,314.5L332.8,317.2L344.3,313.7M310.2,135.2L317.2,139.5L321.3,149.0M339.3,431.2L342.6,444.5L335.6,447.6M261.4,102.3L253.5,106.6L248.3,100.0M41.1,244.5L48.6,245.1L55.5,241.0M441.8,157.2L441.8,173.5L444.3,177.2M403.8,111.0L413.1,116.6L417.7,116.3M240.2,246.0L248.6,249.1L260.1,246.2M487.4,427.7L488.0,437.3L498.6,438.5M409.1,289.1L407.8,305.7L405.2,309.0M87.3,166.3L82.3,176.4L83.4,183.8M148.1,69.3L150.3,76.0L157.4,81.5M321.8,321.7L316.1,338.5L319.1,349.2M78.4,150.0L68.0,164.0L67.7,171.5M374.5,149.7L390.0,158.5L393.7,166.2M240.4,393.4L242.5,402.3L246.8,406.2M244.0,454.5L237.2,463.4L236.7,472.0M460.5,392.4L445.5,401.8L435.5,401.4M336.4,159.9L334.0,170.5L345.0,175.0M109.9,369.9L112.5,381.7L106.7,384.1M330.4,269.7L314.9,276.8L310.0,284.8M188.0,380.0L181.1,381.8L177.9,374.8M311.3,453.5L320.7,452.2L328.1,445.4M78.6,179.3L79.0,189.6L85.9,190.6M180.1,202.3L192.5,203.6L200.7,199.2M116.1,183.5L124.2,183.3L126.4,194.4M366.1,70.6L361.4,81.5L352.3,79.3M189.1,191.3L203.2,194.2L210.5,201.7M503.0,395.8L502.6,407.1L497.4,414.2M545.3,148.7L540.0,156.9L530.4,160.8M494.0,129.7L484.5,140.2L489.3,146.3M349.6,198.2L351.2,206.8L349.4,210.9M292.4,325.5L288.6,340.2L283.9,339.9M62.7,200.2L47.0,204.9L42.4,195.6M253.8,420.8L263.1,420.3L264.1,410.8M205.1,245.6L208.1,251.0L214.6,248.7M167.4,176.0L173.4,184.5L181.6,187.5M177.6,104.8L188.3,110.5L192.2,117.9M490.7,406.5L489.2,421.0L496.3,423.0M239.7,260.1L227.6,264.8L228.9,271.0M191.6,215.5L188.0,228.4L181.7,233.6M228.2,426.4L242.2,429.1L246.5,427.2M296.6,150.0L312.6,155.7L314.9,151.7M166.4,445.5L179.1,446.3L180.2,457.1M304.6,453.2L311.0,456.8L317.6,448.8M406.0,358.1L389.6,363.3L384.2,370.2M319.9,82.2L320.3,93.8L329.6,95.0M151.0,237.4L168.3,242.0L167.9,246.1M409.4,427.1L424.5,425.3L429.3,427.9M496.3,267.7L496.6,275.9L506.5,277.4M69.3,73.6L69.7,82.0L60.0,84.2M493.9,316.1L497.5,332.5L504.1,332.2M99.0,62.7L100.2,75.4L107.3,83.8M376.1,213.9L376.5,225.8L370.7,227.0M182.8,424.3L183.5,433.2L190.5,433.9M519.1,324.1L529.5,333.6L540.9,335.2M203.8,62.8L193.8,66.4L189.6,65.3M54.3,450.2L57.9,460.3L63.4,459.3M45.8,321.3L44.4,330.0L51.8,332.6M62.0,275.4L72.0,278.7L77.1,269.2M357.2,356.1L358.9,362.5L354.2,364.6M123.1,74.9L135.9,79.9L138.4,75.9M63.9,396.0L78.6,401.3L77.6,407.0M132.1,238.8L120.1,245.2L121.5,249.6M463.2,374.3L452.0,380.6L447.5,375.1M282.8,75.8L298.4,73.7L300.6,80.7M443.8,398.2L449.8,414.4L455.0,413.4M449.6,409.9L450.5,423.7L447.4,429.1M189.9,357.8L204.0,367.5L210.3,361.0M483.0,195.7L492.5,210.7L502.5,215.0M225.4,300.4L237.7,304.2L245.2,313.6M469.7,320.4L480.5,319.5L481.7,324.4M439.7,84.7L438.3,93.1L440.6,98.1M269.1,400.3L278.8,404.2L283.1,397.1M174.6,211.0L180.6,211.1L182.0,220.5M361.1,314.6L347.6,315.9L345.6,308.7M510.7,378.1L501.0,391.2L500.7,397.3M327.7,155.8L324.8,167.0L335.2,171.7M375.6,440.5L371.2,447.1L364.4,444.2M472.4,276.5L464.9,288.4L458.4,285.8M517.9,115.2L513.8,128.8L517.1,139.2M230.5,104.8L228.2,116.3L223.9,116.2M122.7,85.4L129.9,85.5L139.1,92.2M230.9,317.9L233.1,330.4L244.0,330.3M386.7,447.0L390.4,455.7L396.9,459.9M45.5,249.1L51.8,264.9L59.7,263.2M70.1,112.2L77.2,112.5L80.9,115.2M351.5,226.8L358.5,242.3L368.3,248.2M389.3,399.3L394.1,403.8L402.3,405.1M532.6,438.4L523.0,443.9L526.4,453.4M267.6,177.2L274.6,192.6L271.3,194.8M126.4,116.5L120.8,132.2L112.4,130.7M119.2,192.2L115.6,197.7L109.5,195.0M113.7,369.7L129.0,378.6L132.3,385.7M501.1,373.9L490.3,386.9L495.3,392.8M194.2,424.0L183.4,437.7L182.6,449.1M525.8,305.4L531.9,314.5L524.3,321.8M162.2,395.1L177.7,400.4L180.2,395.7M304.7,407.3L319.4,410.6L325.8,417.5M484.8,432.0L481.1,438.4L475.6,436.5M164.6,227.2L163.6,235.5L158.2,235.8M539.0,300.4L535.2,311.8L537.1,318.8M372.0,208.6L364.6,210.1L358.3,207.5M220.2,396.2L216.7,411.9L220.3,420.7M62.9,212.6L78.4,211.1L86.0,215.3M365.7,337.8L363.8,351.2L356.9,358.7M290.7,97.5L301.3,102.3L307.2,93.7M517.5,380.0L519.1,386.2L516.4,393.7M46.1,226.5L56.7,234.4L53.9,239.7M279.3,253.7L285.6,262.8L285.6,268.8M108.2,307.0L107.0,314.4L101.6,314.4M376.0,260.1L372.3,267.0L364.7,271.1M499.3,439.7L488.1,442.8L479.2,439.8M120.9,270.4L106.2,273.2L102.9,276.6M114.3,78.7L103.7,89.8L97.5,85.7M278.3,284.1L282.3,296.8L272.7,301.7M451.4,60.5L468.2,61.1L469.2,56.7M176.8,365.2L184.8,367.1L190.3,373.1M144.1,243.6L150.5,253.2L158.5,249.6M330.3,274.1L315.5,284.0L312.1,292.4M283.8,322.1L270.5,329.4L265.4,339.6M146.8,107.8L138.8,122.7L128.1,119.2M282.6,110.6L287.7,118.5L287.5,126.0M273.9,245.8L276.6,257.5L272.3,268.5M397.2,121.2L407.5,121.6L408.6,129.9M498.2,325.5L494.1,330.3L488.6,331.9M98.4,371.8L112.2,380.1L118.8,379.8M134.4,195.5L125.8,197.3L123.7,192.1M233.7,246.6L241.6,252.2L249.5,252.4M85.6,99.8L86.7,106.5L82.9,114.4M531.1,432.4L524.6,440.0L527.8,443.8M195.0,235.5L203.3,237.1L213.3,232.8M301.1,80.1L303.6,95.6L311.6,103.9M344.7,385.4L354.4,390.2L358.1,396.7M295.9,367.6L301.0,379.1L310.7,385.2M315.7,206.5L306.0,209.1L299.2,216.9M87.5,307.2L96.3,310.9L95.0,316.6M451.6,296.2L448.4,306.0L450.7,314.0M123.2,226.4L110.8,228.9L107.5,232.3M237.7,167.0L222.0,170.2L222.2,179.5M276.3,271.8L288.1,275.0L287.0,285.6M463.1,273.2L469.4,275.2L474.2,273.7M43.7,290.6L60.5,290.4L64.5,287.5M364.5,385.4L357.3,390.2L353.2,400.4M438.0,169.2L448.3,174.3L445.9,182.6M398.7,90.6L389.3,94.0L385.0,86.6M235.3,243.6L224.4,250.0L220.9,245.8M236.8,264.5L249.9,265.4L251.1,276.7M504.6,389.1L499.6,395.8L499.3,404.7" fill="none" stroke="#ffffff" stroke-width="0.9" stroke-opacity="0.85" stroke-linejoin="round"/><polyline points="185,0 192,40 201,81 203,94 239,108 263,117 279,137 284,155 283,201" fill="none" stroke="#ffffff" stroke-width="1.7" stroke-linejoin="round" stroke-linecap="round" /><polyline points="283,202 295,211 375,256 420,280" fill="none" stroke="#ffffff" stroke-width="1.7" stroke-linejoin="round" stroke-linecap="round" /><polyline points="293,211 340,178 375,161 400,150" fill="none" stroke="#ffffff" stroke-width="1.7" stroke-linejoin="round" stroke-linecap="round" /><polyline points="291,213 311,310 330,380 340,456" fill="none" stroke="#ffffff" stroke-width="1.7" stroke-linejoin="round" stroke-linecap="round" /><polyline points="453.5,0 441,23.5 426,40 437,52 441,61 434,76 423,90 416,105 408,155 408,188 374,252.5 355,300" fill="none" stroke="#ffffff" stroke-width="1.7" stroke-linejoin="round" stroke-linecap="round" /><polyline points="412,0 417,18 426,40" fill="none" stroke="#ffffff" stroke-width="1.7" stroke-linejoin="round" stroke-linecap="round" /><polyline points="462.5,0 500.5,32.5 504,41.5 535,87 520,107 522,126 531,155 540,200" fill="none" stroke="#ffffff" stroke-width="1.7" stroke-linejoin="round" stroke-linecap="round" /><polyline points="500.5,32.5 516,20" fill="none" stroke="#ffffff" stroke-width="1.7" stroke-linejoin="round" stroke-linecap="round" /><polyline points="434,125 470,123 510,125 524,130 551,140" fill="none" stroke="#ffffff" stroke-width="1.7" stroke-linejoin="round" stroke-linecap="round" /><polyline points="117.4,68.6 137.3,71.3 180.6,79.5 190,79.5" fill="none" stroke="#ffffff" stroke-width="1.7" stroke-linejoin="round" stroke-linecap="round" /><polyline points="126.4,16.3 137.3,36.1 137.3,71.3" fill="none" stroke="#ffffff" stroke-width="1.7" stroke-linejoin="round" stroke-linecap="round" /><polyline points="117,0 126.4,16.3" fill="none" stroke="#ffffff" stroke-width="1.7" stroke-linejoin="round" stroke-linecap="round" /><polyline points="126.4,10.8 171.6,0" fill="none" stroke="#ffffff" stroke-width="1.7" stroke-linejoin="round" stroke-linecap="round" /><polyline points="117.4,68.6 103.8,79.5 102.9,92.1 108.4,94.8 102.9,111.1 130,155 104.7,182.1 99.3,191.1 98.4,212.8 99.3,308.5 104.7,319.4 115.6,355.6 122.8,380.9 140.9,406.1 180.6,427.8 210,445" fill="none" stroke="#ffffff" stroke-width="1.7" stroke-linejoin="round" stroke-linecap="round" /><polyline points="0,65 27.1,83.1 28.9,90.3 52.4,106.6 61.4,106.6 72.2,98.4 102.9,111.1" fill="none" stroke="#ffffff" stroke-width="1.7" stroke-linejoin="round" stroke-linecap="round" /><polyline points="113.8,217.3 151.7,225.4" fill="none" stroke="#ffffff" stroke-width="1.7" stroke-linejoin="round" stroke-linecap="round" /><polyline points="28.9,245.3 63.2,227.2 98.4,212.8" fill="none" stroke="#ffffff" stroke-width="1.7" stroke-linejoin="round" stroke-linecap="round" /><polyline points="9,182.1 45.2,189.3 63.2,194.7" fill="none" stroke="#ffffff" stroke-width="1.7" stroke-linejoin="round" stroke-linecap="round" /><polyline points="0,346.5 37.9,366.4 48.8,357.4 75.9,371.8 97.5,378.1 121,378.1" fill="none" stroke="#ffffff" stroke-width="1.7" stroke-linejoin="round" stroke-linecap="round" /><polyline points="48.8,357.4 48.8,350.2 83.1,315.8" fill="none" stroke="#ffffff" stroke-width="1.7" stroke-linejoin="round" stroke-linecap="round" /><polyline points="37.9,366.4 19.9,386.3 0,404.3" fill="none" stroke="#ffffff" stroke-width="1.7" stroke-linejoin="round" stroke-linecap="round" /><polyline points="19.9,386.3 34.3,404.3 61.4,403.4 65,413.4 48.8,449.5" fill="none" stroke="#ffffff" stroke-width="1.7" stroke-linejoin="round" stroke-linecap="round" /><polyline points="128.2,395.3 106.6,409.7 99.3,422.4 104.7,460" fill="none" stroke="#ffffff" stroke-width="1.7" stroke-linejoin="round" stroke-linecap="round" /><polyline points="99.3,454.9 162.5,435 190,427.8 235.6,398.9 278.9,361 320.5,332.1 340,318" fill="none" stroke="#ffffff" stroke-width="1.7" stroke-linejoin="round" stroke-linecap="round" /><polyline points="185,420.6 220,410 270,413 313,417 370,405" fill="none" stroke="#ffffff" stroke-width="1.7" stroke-linejoin="round" stroke-linecap="round" /><polyline points="365,316 401,356 428,390 470,430" fill="none" stroke="#ffffff" stroke-width="1.7" stroke-linejoin="round" stroke-linecap="round" /><polyline points="365,392 428,389 477,388 524,372 551,356" fill="none" stroke="#ffffff" stroke-width="1.7" stroke-linejoin="round" stroke-linecap="round" /><polyline points="463,355 477,388 491,406 499,442 505,457" fill="none" stroke="#ffffff" stroke-width="1.7" stroke-linejoin="round" stroke-linecap="round" /><polyline points="452,355 515,356" fill="none" stroke="#ffffff" stroke-width="1.7" stroke-linejoin="round" stroke-linecap="round" /><polyline points="524,372 522,356 530,305 551,290" fill="none" stroke="#ffffff" stroke-width="1.7" stroke-linejoin="round" stroke-linecap="round" /><polyline points="338,287 420,280 470,300" fill="none" stroke="#ffffff" stroke-width="1.7" stroke-linejoin="round" stroke-linecap="round" /><polyline points="140.9,9 149.9,13.5 155.3,18.1 162.5,37.9 178.8,68.6 185,79 195.8,117.4 228.3,155 244.6,171.3 275.3,194.7 283,201" fill="none" stroke="#e6bb6a" stroke-width="3.4" stroke-linejoin="round" stroke-linecap="round" /><polyline points="140.9,9 152,0" fill="none" stroke="#e6bb6a" stroke-width="3.4" stroke-linejoin="round" stroke-linecap="round" /><polyline points="175,0 170,8 157,18" fill="none" stroke="#e6bb6a" stroke-width="3.4" stroke-linejoin="round" stroke-linecap="round" /><polyline points="283,202 270,201 212,199 190,204 164,215 168,227" fill="none" stroke="#e6bb6a" stroke-width="3.4" stroke-linejoin="round" stroke-linecap="round" /><polyline points="0,173 7,182 18,209 29,245 36,251 54,252.5 81,245 126,233 168,227 190,231 212,233 237,238 266,258 293,256 311,253 338,260 375,255 383,252.5 455,249 481,242 524,231 551,220" fill="none" stroke="#e6bb6a" stroke-width="3.4" stroke-linejoin="round" stroke-linecap="round" /><polyline points="29,245 0,267" fill="none" stroke="#e6bb6a" stroke-width="3.4" stroke-linejoin="round" stroke-linecap="round" /><polyline points="126,233 125,281 137,310 141,327 150,356 164,381 141,406 134,428 137,450 145,460" fill="none" stroke="#e6bb6a" stroke-width="3.4" stroke-linejoin="round" stroke-linecap="round" /><polyline points="324,236 322,258 330,267 340,287 355,300 365,316 347.5,326.7 338.5,344.7 325.9,388.1 313.2,417 313.2,460" fill="none" stroke="#e6bb6a" stroke-width="3.4" stroke-linejoin="round" stroke-linecap="round" /><polyline points="365,449.5 437,424 491,402.5 551,365" fill="none" stroke="#e6bb6a" stroke-width="3.4" stroke-linejoin="round" stroke-linecap="round" /><polyline points="300,460 365,449.5" fill="none" stroke="#e6bb6a" stroke-width="3.4" stroke-linejoin="round" stroke-linecap="round" /><polyline points="140.9,9 149.9,13.5 155.3,18.1 162.5,37.9 178.8,68.6 185,79 195.8,117.4 228.3,155 244.6,171.3 275.3,194.7 283,201" fill="none" stroke="#f9d47c" stroke-width="2.3" stroke-linejoin="round" stroke-linecap="round" /><polyline points="140.9,9 152,0" fill="none" stroke="#f9d47c" stroke-width="2.3" stroke-linejoin="round" stroke-linecap="round" /><polyline points="175,0 170,8 157,18" fill="none" stroke="#f9d47c" stroke-width="2.3" stroke-linejoin="round" stroke-linecap="round" /><polyline points="283,202 270,201 212,199 190,204 164,215 168,227" fill="none" stroke="#f9d47c" stroke-width="2.3" stroke-linejoin="round" stroke-linecap="round" /><polyline points="0,173 7,182 18,209 29,245 36,251 54,252.5 81,245 126,233 168,227 190,231 212,233 237,238 266,258 293,256 311,253 338,260 375,255 383,252.5 455,249 481,242 524,231 551,220" fill="none" stroke="#f9d47c" stroke-width="2.3" stroke-linejoin="round" stroke-linecap="round" /><polyline points="29,245 0,267" fill="none" stroke="#f9d47c" stroke-width="2.3" stroke-linejoin="round" stroke-linecap="round" /><polyline points="126,233 125,281 137,310 141,327 150,356 164,381 141,406 134,428 137,450 145,460" fill="none" stroke="#f9d47c" stroke-width="2.3" stroke-linejoin="round" stroke-linecap="round" /><polyline points="324,236 322,258 330,267 340,287 355,300 365,316 347.5,326.7 338.5,344.7 325.9,388.1 313.2,417 313.2,460" fill="none" stroke="#f9d47c" stroke-width="2.3" stroke-linejoin="round" stroke-linecap="round" /><polyline points="365,449.5 437,424 491,402.5 551,365" fill="none" stroke="#f9d47c" stroke-width="2.3" stroke-linejoin="round" stroke-linecap="round" /><polyline points="300,460 365,449.5" fill="none" stroke="#f9d47c" stroke-width="2.3" stroke-linejoin="round" stroke-linecap="round" /><polygon points="344,263 372,262 376,280 350,282" fill="#f3e9cf"  opacity="0.8"/><polygon points="326,329 351,329 351,345 326,345" fill="#f2dede" /><g font-family="Liberation Sans, sans-serif" font-size="6.6" fill="#5f6368" stroke="#ffffff" stroke-width="1.6" stroke-opacity="0.8" paint-order="stroke" text-anchor="middle"><text transform="translate(186,23) rotate(80)" y="2.3">Milton Rd</text><text transform="translate(135,41) rotate(85)" y="2.3">Station Rd</text><text transform="translate(154,76) rotate(15)" y="2.3">Lovell Rd</text><text transform="translate(43,96) rotate(35)" y="2.3">Park Rd</text><text transform="translate(118,134) rotate(70)" y="2.3">Oakley Rd</text><text transform="translate(17,210) rotate(70)" y="2.3">A428</text><text transform="translate(75,248) rotate(-20)" y="2.3">A428</text><text transform="translate(189,204) rotate(-10)" y="2.3">A6</text><text transform="translate(201,232) rotate(10)" y="2.3">A4280</text><text transform="translate(125,286) rotate(80)" y="2.3">A6</text><text transform="translate(151,356) rotate(70)" y="2.3">A6</text><text transform="translate(84,367) rotate(20)" y="2.3">B560</text><text transform="translate(134,426) rotate(80)" y="2.3">A6</text><text transform="translate(277,256) rotate(5)" y="2.3">A4280</text><text transform="translate(320,256) rotate(5)" y="2.3">A4280</text><text transform="translate(297,239) rotate(80)" y="2.3">A5141</text><text transform="translate(414,93) rotate(-60)" y="2.3">B660</text><text transform="translate(440,20) rotate(-60)" y="2.3">B660</text><text transform="translate(478,12) rotate(35)" y="2.3">Oldways Rd</text><text transform="translate(513,67) rotate(60)" y="2.3">Ravensden Rd</text><text transform="translate(338,172) rotate(-55)" y="2.3">Brickhill Dr</text><text transform="translate(428,172) rotate(-50)" y="2.3">Putnoe Ln</text><text transform="translate(486,169) rotate(50)" y="2.3">Putnoe St</text><text transform="translate(384,233) rotate(-60)" y="2.3">B660</text><text transform="translate(469,248) rotate(-15)" y="2.3">A4280</text><text transform="translate(501,251) rotate(-70)" y="2.3">Barkers Ln</text><text transform="translate(486,297) rotate(-20)" y="2.3">Barkers Ln</text><text transform="translate(265,370) rotate(-45)" y="2.3">B531</text><text transform="translate(396,356) rotate(55)" y="2.3">London Rd</text><text transform="translate(329,373) rotate(-70)" y="2.3">Ampthill Rd</text><text transform="translate(358,376) rotate(-70)" y="2.3">Elstow Rd</text><text transform="translate(492,356) rotate(5)" y="2.3">Cardington Rd</text><text transform="translate(341,402) rotate(-60)" y="2.3">A5134</text><text transform="translate(387,394) rotate(5)" y="2.3">Mile Rd</text><text transform="translate(451,390) rotate(0)" y="2.3">A5134</text><text transform="translate(501,380) rotate(-20)" y="2.3">A5134</text><text transform="translate(207,423) rotate(-25)" y="2.3">High St</text><text transform="translate(288,414) rotate(10)" y="2.3">Elstow Rd</text><text transform="translate(303,431) rotate(-60)" y="2.3">B530</text><text transform="translate(446,423) rotate(-20)" y="2.3">A421</text><text transform="translate(491,423) rotate(80)" y="2.3">A600</text><text transform="translate(542,373) rotate(-50)" y="2.3">A421</text></g><g font-family="Liberation Sans, sans-serif"><text x="100.8" y="52.7" font-size="10.2" font-weight="400" fill="#3c4043" stroke="#ffffff" stroke-opacity="0.75" stroke-width="2" paint-order="stroke" >Oakley</text><text x="0" y="64.7" font-size="10.2" font-weight="400" fill="#3c4043" stroke="#ffffff" stroke-opacity="0.75" stroke-width="2" paint-order="stroke" >ton</text><text x="185.9" y="89.4" font-size="10.2" font-weight="400" fill="#3c4043" stroke="#ffffff" stroke-opacity="0.75" stroke-width="2" paint-order="stroke" >Clapham</text><text x="186" y="102.6" font-size="10.2" font-weight="400" fill="#d0457f" stroke="#ffffff" stroke-opacity="0.75" stroke-width="2" paint-order="stroke" >Woodland Manor</text><text x="179" y="112.3" font-size="10.2" font-weight="400" fill="#d0457f" stroke="#ffffff" stroke-opacity="0.75" stroke-width="2" paint-order="stroke" >Hotel &amp; Restaurant</text><text x="330.8" y="69" font-size="10.2" font-weight="400" fill="#1f8043" stroke="#ffffff" stroke-opacity="0.75" stroke-width="2" paint-order="stroke" >Mowsbury Golf Course</text><text x="502" y="3.6" font-size="10.2" font-weight="400" fill="#3c4043" stroke="#ffffff" stroke-opacity="0.75" stroke-width="2" paint-order="stroke" >Ravensden</text><text x="514.5" y="101.5" font-size="10.2" font-weight="400" fill="#3c4043" stroke="#ffffff" stroke-opacity="0.75" stroke-width="2" paint-order="stroke" >Salph End</text><text x="431" y="115.2" font-size="10.2" font-weight="400" fill="#1f8043" stroke="#ffffff" stroke-opacity="0.75" stroke-width="2" paint-order="stroke" >Mowsbury</text><text x="443.6" y="124.6" font-size="10.2" font-weight="400" fill="#1f8043" stroke="#ffffff" stroke-opacity="0.75" stroke-width="2" paint-order="stroke" >Park</text><text x="480.6" y="145.4" font-size="10.2" font-weight="400" fill="#5f6368" stroke="#ffffff" stroke-opacity="0.75" stroke-width="2" paint-order="stroke" >Bedford Crematorium</text><text x="5.4" y="152.6" font-size="10.2" font-weight="400" fill="#1f8043" stroke="#ffffff" stroke-opacity="0.75" stroke-width="2" paint-order="stroke" >The Leslie Sell</text><text x="4.5" y="162.2" font-size="10.2" font-weight="400" fill="#1f8043" stroke="#ffffff" stroke-opacity="0.75" stroke-width="2" paint-order="stroke" >Activity Centre</text><text x="87.6" y="179.7" font-size="10.2" font-weight="400" fill="#3c4043" stroke="#ffffff" stroke-opacity="0.75" stroke-width="2" paint-order="stroke" >Bromham</text><text x="216.6" y="172.2" font-size="10.2" font-weight="400" fill="#1f8043" stroke="#ffffff" stroke-opacity="0.75" stroke-width="2" paint-order="stroke" >Towers Health</text><text x="207.6" y="181.7" font-size="10.2" font-weight="400" fill="#1f8043" stroke="#ffffff" stroke-opacity="0.75" stroke-width="2" paint-order="stroke" >&amp; Racquets Club</text><text x="217.5" y="209.2" font-size="10.2" font-weight="400" fill="#3b78d8" stroke="#ffffff" stroke-opacity="0.75" stroke-width="2" paint-order="stroke" >Sainsbury's</text><text x="335.8" y="208.3" font-size="10.2" font-weight="400" fill="#1f8043" stroke="#ffffff" stroke-opacity="0.75" stroke-width="2" paint-order="stroke" >Bedford Park</text><text x="451.7" y="196.2" font-size="8.2" font-weight="700" fill="#5f6368" stroke="#ffffff" stroke-opacity="0.75" stroke-width="2" paint-order="stroke" letter-spacing="0.9">PUTNOE</text><text x="59.2" y="224.9" font-size="10.2" font-weight="400" fill="#3c4043" stroke="#ffffff" stroke-opacity="0.75" stroke-width="2" paint-order="stroke" >Bridge End</text><text x="444.5" y="232.7" font-size="10.2" font-weight="400" fill="#3b78d8" stroke="#ffffff" stroke-opacity="0.75" stroke-width="2" paint-order="stroke" >Tesco Superstore</text><text x="151" y="246.6" font-size="10.2" font-weight="400" fill="#3c4043" stroke="#ffffff" stroke-opacity="0.75" stroke-width="2" paint-order="stroke" >Biddenham</text><text x="339.4" y="264.3" font-size="10.2" font-weight="400" fill="#3c4043" stroke="#ffffff" stroke-opacity="0.75" stroke-width="2" paint-order="stroke" >Bedford</text><text x="145" y="307.3" font-size="10.2" font-weight="400" fill="#1f8043" stroke="#ffffff" stroke-opacity="0.75" stroke-width="2" paint-order="stroke" >The Bedford Great</text><text x="139.5" y="317.8" font-size="10.2" font-weight="400" fill="#1f8043" stroke="#ffffff" stroke-opacity="0.75" stroke-width="2" paint-order="stroke" >Denham Golf Village</text><text x="82.2" y="315.8" font-size="10.2" font-weight="400" fill="#3c4043" stroke="#ffffff" stroke-opacity="0.75" stroke-width="2" paint-order="stroke" >Box End</text><text x="397.5" y="294.1" font-size="10.2" font-weight="400" fill="#1f8043" stroke="#ffffff" stroke-opacity="0.75" stroke-width="2" paint-order="stroke" >Russell Park</text><text x="253.6" y="318.5" font-size="10.2" font-weight="400" fill="#d9473b" stroke="#ffffff" stroke-opacity="0.75" stroke-width="2" paint-order="stroke" >Bedford Hospital</text><text x="278" y="328.1" font-size="10.2" font-weight="400" fill="#d9473b" stroke="#ffffff" stroke-opacity="0.75" stroke-width="2" paint-order="stroke" >South Wing</text><text x="361" y="316.2" font-size="10.2" font-weight="400" fill="#3b78d8" stroke="#ffffff" stroke-opacity="0.75" stroke-width="2" paint-order="stroke" >Tesco Extra</text><text x="487.8" y="315.8" font-size="10.2" font-weight="400" fill="#1f8043" stroke="#ffffff" stroke-opacity="0.75" stroke-width="2" paint-order="stroke" >Priory</text><text x="472.5" y="325.2" font-size="10.2" font-weight="400" fill="#1f8043" stroke="#ffffff" stroke-opacity="0.75" stroke-width="2" paint-order="stroke" >Country Park</text><text x="58.7" y="343.8" font-size="10.2" font-weight="400" fill="#5f6368" stroke="#ffffff" stroke-opacity="0.75" stroke-width="2" paint-order="stroke" >Box End Park</text><text x="208.5" y="405.2" font-size="10.2" font-weight="400" fill="#3c4043" stroke="#ffffff" stroke-opacity="0.75" stroke-width="2" paint-order="stroke" >Kempston</text><text x="434.5" y="442.3" font-size="10.2" font-weight="400" fill="#3c4043" stroke="#ffffff" stroke-opacity="0.75" stroke-width="2" paint-order="stroke" >Harrowden</text><text x="198.5" y="454" font-size="10.2" font-weight="400" fill="#3b78d8" stroke="#ffffff" stroke-opacity="0.75" stroke-width="2" paint-order="stroke" >The Interchange</text></g><path d="M71.628,151.64 A6.6,6.6 0 1 1 83.772,151.64 L77.7,162.2 Z" fill="#1e8e3e"/><path d="M74.5,151.5 L77.7,146 L80.9,151.5 Z" fill="#fff"/><path d="M265.812,102.76 A6.4,6.4 0 1 1 277.58799999999997,102.76 L271.7,113.8 Z" fill="#e8567e"/><rect x="268.3" y="98.3" width="6.8" height="3.8" fill="#fff"/><path d="M435.128,64.03999999999999 A6.6,6.6 0 1 1 447.272,64.03999999999999 L441.2,74 Z" fill="#1e8e3e"/><path d="M439,57.5 L442,57.5 L440,65" stroke="#fff" stroke-width="1.3" fill="none"/><path d="M283.328,173.04 A6.6,6.6 0 1 1 295.472,173.04 L289.4,183 Z" fill="#1e8e3e"/><circle cx="289.4" cy="170.4" r="2.2" fill="#fff"/><path d="M178.128,287.64 A6.6,6.6 0 1 1 190.272,287.64 L184.2,297.7 Z" fill="#1e8e3e"/><path d="M182.1,281.5 L185.6,281.5 L183.1,288.5" stroke="#fff" stroke-width="1.3" fill="none"/><path d="M525.312,227.96 A6.4,6.4 0 1 1 537.0880000000001,227.96 L531.2,238.1 Z" fill="#3d86e8"/><path d="M527.5,222.5 L534.5,222.5 L533.5,227 L528.5,227 Z" fill="#fff"/><path d="M416.012,312.66 A6.4,6.4 0 1 1 427.78799999999995,312.66 L421.9,322.2 Z" fill="#3d86e8"/><path d="M418.2,307.2 L425.2,307.2 L424.2,311.7 L419.2,311.7 Z" fill="#fff"/><path d="M545.112,211.56 A6.4,6.4 0 1 1 556.888,211.56 L551,221 Z" fill="#3d86e8"/><path d="M332.028,318.44 A6.6,6.6 0 1 1 344.172,318.44 L338.1,328.5 Z" fill="#e0473b"/><path d="M335.6,312.5 V319 M340.6,312.5 V319 M335.6,315.8 H340.6" stroke="#fff" stroke-width="1.3"/><path d="M120.512,340.06 A6.4,6.4 0 1 1 132.288,340.06 L126.4,349.2 Z" fill="#70757a"/><circle cx="126.4" cy="336.5" r="2" fill="#fff"/><circle cx="122.8" cy="352.9" r="3.4" fill="#f3e2c0"/><circle cx="278.5" cy="449.5" r="6.2" fill="#3d86e8"/><path d="M275.5,447.5 H281.5 V452 H275.5 Z M276.8,447.5 V446.3 A1.7,1.7 0 0 1 280.2,446.3 V447.5" fill="#fff" stroke="#fff" stroke-width="0.6"/><circle cx="277.5" cy="200.2" r="6" fill="#3d86e8"/><path d="M273.8,198.3 L281.2,198.3 L280.2,202.3 L274.8,202.3 Z" fill="#fff"/><circle cx="298" cy="267" r="2.3" fill="#e04545" opacity="0.8"/><path d="M266.9,214.6 A8.8,8.8 0 1 1 284.5,214.6 C284.5,219 279,222 275.7,227.5 C272.4,222 266.9,219 266.9,214.6 Z" fill="#ea4335" stroke="#c5221f" stroke-width="0.6"/><circle cx="275.7" cy="211.5" r="2.8" fill="#a50e0e"/><circle cx="-1" cy="33.4" r="6.5" fill="#8a8d90"/><defs><filter id="sh" x="-20%" y="-20%" width="140%" height="140%"><feDropShadow dx="0" dy="0.6" stdDeviation="0.7" flood-opacity="0.25"/></filter></defs><rect x="7" y="7.2" width="119.4" height="28" fill="#fff" filter="url(#sh)"/><rect x="56.3" y="7.2" width="0.8" height="28" fill="#e6e6e6"/><text x="19.5" y="26" font-family="Liberation Sans, sans-serif" font-size="12.3" font-weight="700" fill="#111">Map</text><text x="69.2" y="26" font-family="Liberation Sans, sans-serif" font-size="12.6" fill="#565656">Satellite</text><rect x="515.8" y="7.2" width="28" height="28" fill="#fff" filter="url(#sh)"/><path d="M524,18 V15 H527 M533,15 H536 V18 M536,25 V28 H533 M527,28 H524 V25" fill="none" stroke="#666" stroke-width="1.6"/><rect x="515.8" y="330.3" width="28" height="28" fill="#fff" filter="url(#sh)"/><g fill="#f6b400"><circle cx="529.8" cy="337.5" r="2.6"/><path d="M526,341 H533.6 V349 H532 V356 H527.6 V349 H526 Z"/></g><rect x="515.8" y="380.9" width="28" height="57.7" fill="#fff" filter="url(#sh)"/><rect x="520" y="409.5" width="19.6" height="0.7" fill="#e6e6e6"/><path d="M524.5,395.3 H534.9 M529.7,390.1 V400.5" stroke="#666" stroke-width="2"/><path d="M524.5,424.6 H534.9" stroke="#666" stroke-width="2"/><g font-family="Liberation Sans, sans-serif" font-size="13" font-weight="700" stroke="#fff" stroke-width="1.6" paint-order="stroke"><text x="6.8" y="450.8" textLength="40" lengthAdjust="spacingAndGlyphs"><tspan fill="#4285f4">G</tspan><tspan fill="#ea4335">o</tspan><tspan fill="#fbbc05">o</tspan><tspan fill="#4285f4">g</tspan><tspan fill="#34a853">l</tspan><tspan fill="#ea4335">e</tspan></text></g><rect x="300" y="445" width="252" height="12" fill="#f5f5f5" opacity="0.7"/><g font-family="Liberation Sans, sans-serif" font-size="7.2" fill="#444"><text x="304" y="454">Keyboard shortcuts</text><text x="374.8" y="454">Map data ©2022</text><text x="437" y="454">Terms of Use</text><text x="487.6" y="454">Report a map error</text></g></svg>
<div class="b" style="left:200px;top:820px;width:379px;height:28px;background:#ffffff;box-shadow:0 0 1px rgba(0,0,0,0.08);"></div>
<div class="t" style="left:217.00px;top:834.93px;font-size:13.38px;font-weight:400;color:#222222;letter-spacing:-0.03em;">Income</div>
<div class="b" style="left:584px;top:820px;width:380px;height:28px;background:#ffffff;box-shadow:0 0 1px rgba(0,0,0,0.08);"></div>
<div class="t" style="left:601.50px;top:834.93px;font-size:13.38px;font-weight:400;color:#222222;letter-spacing:-0.03em;">Expediture</div>
<div class="b" style="left:969px;top:820px;width:379px;height:28px;background:#ffffff;box-shadow:0 0 1px rgba(0,0,0,0.08);"></div>
<div class="t" style="left:986.00px;top:834.93px;font-size:13.38px;font-weight:400;color:#222222;letter-spacing:-0.03em;">Profit/Loss</div>
</div></body></html>
